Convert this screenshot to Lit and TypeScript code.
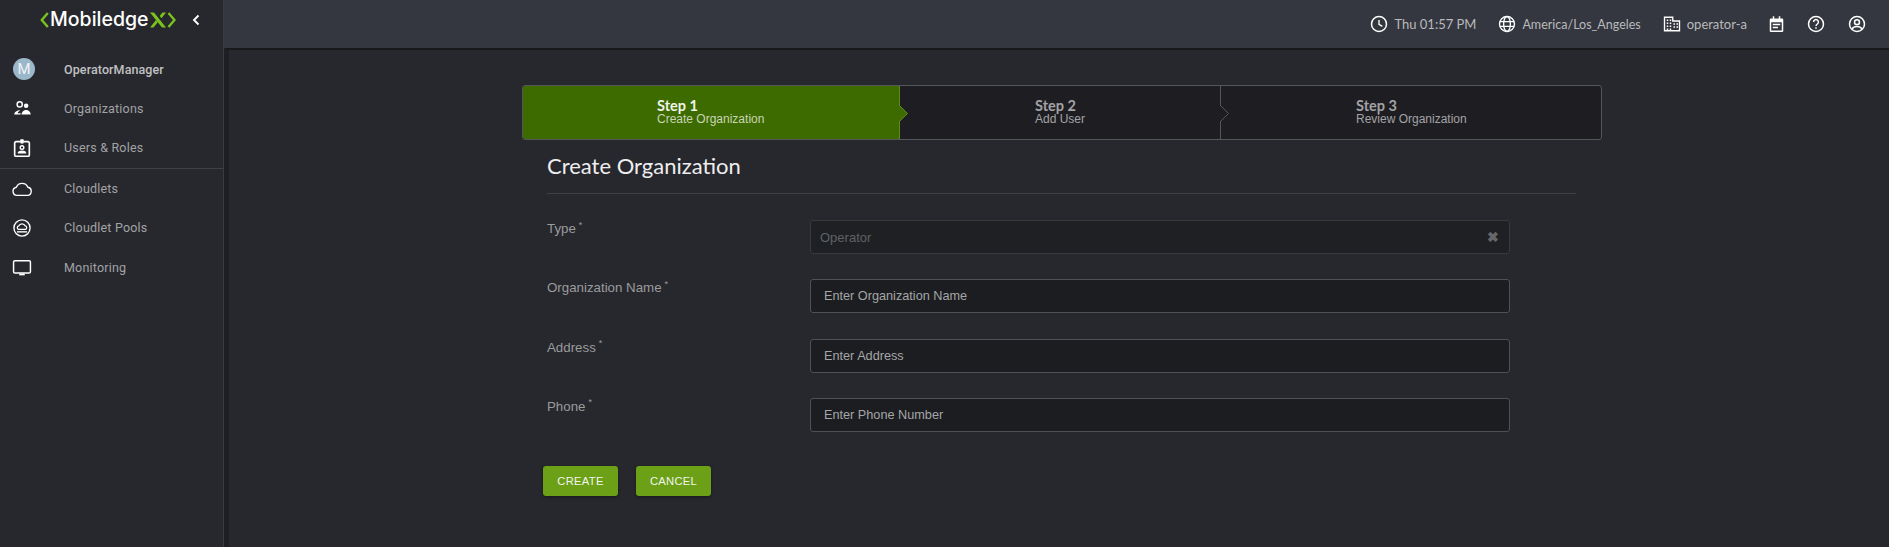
import { LitElement, html, css, svg } from 'lit';
import { customElement } from 'lit/decorators.js';

const NAV_TOP = [
  { label: 'Organizations', icon: svg`<circle cx="9.500" cy="7" r="2.800" fill="none" stroke="#fff" stroke-width="1.600"/><circle cx="16.500" cy="8.500" r="2.500" fill="#fff"/><path d="M3.500 18c.3-2.800 3-4.600 6.500-4.600-1.600 1-2.400 2-2.700 3.100h3.200V18z" fill="#fff"/><path d="M11.500 18c0-2.800 2.600-5 5-5s5 2.200 5 5z" fill="#fff"/>` },
  { label: 'Users & Roles', icon: svg`<path d="M10 5H5.500A1.500 1.500 0 0 0 4 6.500v13A1.500 1.500 0 0 0 5.500 21h13a1.500 1.500 0 0 0 1.500-1.500v-13A1.500 1.500 0 0 0 18.500 5H14" fill="none" stroke="#fff" stroke-width="1.800"/><rect x="10" y="2.500" width="4" height="4.500" rx="1" fill="#fff"/><circle cx="12" cy="11.500" r="2" fill="none" stroke="#fff" stroke-width="1.500"/><path d="M7.500 18v-1c0-1.500 2.700-2.300 4.500-2.300s4.500.8 4.500 2.300v1z" fill="#fff"/>` },
];

const NAV_BOTTOM = [
  { label: 'Cloudlets', icon: svg`<path d="M6.500 19A4.500 4.500 0 0 1 5.800 10.100 6.800 6.800 0 0 1 18.400 10.100 4.500 4.500 0 0 1 18 19z" fill="none" stroke="#fff" stroke-width="1.500"/>` },
  { label: 'Cloudlet Pools', icon: svg`<circle cx="12" cy="12" r="8.800" fill="none" stroke="#fff" stroke-width="1.500"/><path d="M8.300 13.500a1.900 1.900 0 0 1 .1-3.700 3.900 3.900 0 0 1 7.200 0 1.900 1.900 0 0 1 .1 3.700z" fill="none" stroke="#fff" stroke-width="1.400"/><path d="M6.500 16.200h11" stroke="#fff" stroke-width="1.500"/>` },
  { label: 'Monitoring', icon: svg`<rect x="2.800" y="4" width="18.400" height="13.500" rx="1.500" fill="none" stroke="#fff" stroke-width="1.600"/><rect x="9" y="18" width="6" height="2" fill="#fff"/>` },
];

const STEPS = [
  { title: 'Step 1', sub: 'Create Organization', active: true },
  { title: 'Step 2', sub: 'Add User', active: false },
  { title: 'Step 3', sub: 'Review Organization', active: false },
];

const FIELDS = [
  { label: 'Organization Name', placeholder: 'Enter Organization Name' },
  { label: 'Address', placeholder: 'Enter Address' },
  { label: 'Phone', placeholder: 'Enter Phone Number' },
];

@customElement('app-root')
export class AppRoot extends LitElement {
  static styles = css`
    :host {
      display: grid;
      grid-template-columns: 224px 1fr;
      width: 100vw;
      height: 100vh;
      overflow: hidden;
      background: #27282d;
      font-family: 'Liberation Sans', sans-serif;
    }

    svg {
      display: block;
      flex: none;
    }

    .sidebar {
      background: #27282d;
      border-right: 1px solid #3a3b40;
      box-sizing: border-box;
      width: 224px;
    }

    .logo {
      height: 49px;
      display: flex;
      align-items: center;
      padding: 0 0 9px 40px;
      color: #fff;
      box-sizing: border-box;
    }

    .logo-text {
      font: 500 19.500px Inter, sans-serif;
      line-height: 1;
      margin: 0 1px;
    }

    .collapse {
      margin-left: 16px;
    }

    .nav-item {
      height: 39px;
      display: flex;
      align-items: center;
      color: #a2a3a6;
      font: 400 12.500px Roboto, sans-serif;
      letter-spacing: 0.2px;
    }

    .nav-item:last-child {
      height: 41px;
    }

    .nav-item.first {
      height: 40px;
      color: #c0c1c3;
      font-weight: 500;
      letter-spacing: 0.1px;
    }

    .nav-icon {
      width: 64px;
      display: flex;
      justify-content: center;
      padding-right: 20px;
      box-sizing: border-box;
    }

    .avatar {
      width: 22px;
      height: 22px;
      margin-left: 4px;
      border-radius: 50%;
      background: #9bb8cb;
      color: #eef2f5;
      font: 400 15px Roboto, sans-serif;
      display: flex;
      align-items: center;
      justify-content: center;
    }

    .nav-rule {
      height: 1px;
      background: #3f4045;
      margin-top: 1px;
    }

    .main {
      display: flex;
      flex-direction: column;
      min-width: 0;
    }

    .topbar {
      height: 48px;
      flex: none;
      background: #34373f;
      display: flex;
      align-items: center;
      justify-content: flex-end;
      padding-right: 23px;
      color: #b9babd;
      font: 400 13px Lato, sans-serif;
    }

    .top-item {
      display: flex;
      align-items: center;
      gap: 6px;
      margin-right: 22px;
    }

    .top-item.zone {
      font-size: 12.500px;
    }

    .top-icon {
      margin-right: 23px;
    }

    .top-icon:last-child {
      margin-right: 0;
    }

    .content {
      flex: 1;
      border-top: 2px solid #18191b;
      border-left: 5px solid #1e1f22;
      padding: 35px 0 0 293px;
    }

    .stepper {
      width: 1080px;
      height: 55px;
      box-sizing: border-box;
      display: flex;
      border: 1px solid #55565a;
      border-radius: 3px;
      background: #1e1e22;
    }

    .step {
      position: relative;
      display: flex;
      flex-direction: column;
      justify-content: center;
      box-sizing: border-box;
      padding-bottom: 2px;
      color: #a3a3a6;
      border-right: 1px solid #55565a;
    }

    .step:nth-child(1) {
      width: 377px;
      padding-left: 134px;
    }

    .step:nth-child(2) {
      width: 321px;
      padding-left: 135px;
    }

    .step:nth-child(3) {
      flex: 1;
      padding-left: 135px;
      border-right: 0;
    }

    .step.active {
      background: #3d6b00;
      border-right-color: #5c8a1e;
      color: #c8d5b5;
      border-radius: 2px 0 0 2px;
    }

    .step-title {
      font: 700 14.500px/15px Lato, sans-serif;
    }

    .step.active .step-title {
      color: #f0f4ea;
    }

    .step-sub {
      font-size: 12px;
      line-height: 12px;
    }

    .chevron {
      position: absolute;
      right: -9px;
      top: 19px;
      width: 9px;
      height: 17px;
      z-index: 1;
    }

    .form {
      width: 1029px;
      margin-left: 25px;
    }

    h1 {
      margin: 0;
      padding: 12px 0 13px;
      font: 400 22px/28px Lato, sans-serif;
      color: #eeeeef;
      border-bottom: 1px solid #3f4045;
    }

    .rows {
      padding-top: 26px;
    }

    .row {
      display: flex;
      height: 34px;
      margin-bottom: 25.300px;
      color: #9a9b9e;
      font-size: 13.300px;
    }

    .label {
      width: 263px;
      flex: none;
      line-height: 18px;
    }

    .label sup {
      font-size: 9px;
      line-height: 0;
      margin-left: 3px;
    }

    .input {
      width: 700px;
      box-sizing: border-box;
      display: flex;
      align-items: center;
      justify-content: space-between;
      padding: 0 13px;
      color: #a5a6a8;
      background: #1c1d20;
      border: 1px solid #505154;
      border-radius: 3px;
      font-size: 12.700px;
    }

    .input.disabled {
      padding: 0 10px 0 9px;
      color: #5f6064;
      background: #1f2024;
      border-color: #38393d;
      font-size: 13px;
    }

    .clear {
      color: #66676a;
      font-size: 14px;
      font-weight: 700;
      line-height: 1;
    }

    .actions {
      display: flex;
      gap: 18px;
      margin: 34px 0 0 -4px;
    }

    .btn {
      width: 75px;
      height: 30px;
      border: 0;
      border-radius: 3px;
      background: #6ba017;
      color: #f2f5ec;
      font: 400 11.200px 'Liberation Sans', sans-serif;
      letter-spacing: 0.3px;
      box-shadow: 0 1px 3px rgba(0, 0, 0, 0.4);
    }
  `;

  private renderNav(items: typeof NAV_TOP) {
    return items.map(
      (item) => html`
        <div class="nav-item">
          <span class="nav-icon">
            <svg width="22" height="22" viewBox="0 0 24 24">${item.icon}</svg>
          </span>
          ${item.label}
        </div>
      `
    );
  }

  render() {
    return html`
      <aside class="sidebar">
        <div class="logo">
          <svg width="9" height="16" viewBox="0 0 9 16">
            <path d="M7.800 1 1.800 8l6 7" fill="none" stroke="#7ac31c" stroke-width="2.400"/>
          </svg>
          <span class="logo-text">Mobiledge</span>
          <svg width="26" height="16" viewBox="0 0 26 16">
            <path d="M0 .5h4l12 15h-4z" fill="#7ac31c"/>
            <path d="M0 15.500h3.600l4.200-5.300-1.800-2.300zM12.400.5H16l-4.500 5.700-1.800-2.300z" fill="#7ac31c"/>
            <path d="M18.500 1l6 7-6 7" fill="none" stroke="#7ac31c" stroke-width="2.400"/>
          </svg>
          <svg class="collapse" width="8" height="12" viewBox="0 0 8 12">
            <path d="M6.500 1.500 2 6l4.500 4.500" fill="none" stroke="#fff" stroke-width="1.900"/>
          </svg>
        </div>
        <div class="nav-item first">
          <span class="nav-icon"><span class="avatar">M</span></span>
          OperatorManager
        </div>
        ${this.renderNav(NAV_TOP)}
        <div class="nav-rule"></div>
        ${this.renderNav(NAV_BOTTOM)}
      </aside>

      <div class="main">
        <header class="topbar">
          <span class="top-item">
            <svg width="18" height="18" viewBox="0 0 24 24">
              <circle cx="12" cy="12" r="10" fill="none" stroke="#fff" stroke-width="2"/>
              <path d="M12 6.500V12.500l4.500 2.700" fill="none" stroke="#fff" stroke-width="1.800"/>
            </svg>
            Thu 01:57 PM
          </span>
          <span class="top-item zone">
            <svg width="18" height="18" viewBox="0 0 24 24" fill="none" stroke="#fff" stroke-width="1.800">
              <circle cx="12" cy="12" r="10"/>
              <ellipse cx="12" cy="12" rx="4.500" ry="10"/>
              <path d="M2.500 8.800h19M2.500 15.200h19"/>
            </svg>
            America/Los_Angeles
          </span>
          <span class="top-item">
            <svg width="18" height="18" viewBox="0 0 24 24">
              <path d="M2 3h11v5h9v13H2z" fill="none" stroke="#fff" stroke-width="1.800"/>
              <path d="M5 6h2v2H5zM9 6h2v2H9zM5 10h2v2H5zM9 10h2v2H9zM5 14h2v2H5zM9 14h2v2H9zM5 18h2v2H5zM9 18h2v2H9zM14 11h2v2h-2zM18 11h2v2h-2zM14 15h2v2h-2zM18 15h2v2h-2z" fill="#fff"/>
            </svg>
            operator-a
          </span>
          <svg class="top-icon" width="15" height="17" viewBox="0 0 20 22">
            <path d="M5 0h2v3h6V0h2v3h2.500A1.500 1.500 0 0 1 19 4.500v15a1.500 1.500 0 0 1-1.500 1.500h-15A1.500 1.500 0 0 1 1 19.500v-15A1.500 1.500 0 0 1 2.500 3H5zM3 8v11h14V8zM5 10h10v2H5zM5 14h7v2H5z" fill="#fff" fill-rule="evenodd"/>
          </svg>
          <svg class="top-icon" width="18" height="18" viewBox="0 0 24 24" fill="none" stroke="#fff" stroke-width="2">
            <circle cx="12" cy="12" r="10"/>
            <path d="M8.800 9.300a3.200 3.200 0 1 1 5 2.700c-1.200.8-1.800 1.400-1.800 2.800"/>
            <path d="M11 16.300h2v2h-2z" fill="#fff" stroke="none"/>
          </svg>
          <svg class="top-icon" width="18" height="18" viewBox="0 0 24 24" fill="none" stroke="#fff" stroke-width="2">
            <circle cx="12" cy="12" r="10"/>
            <circle cx="12" cy="9.500" r="3.300"/>
            <path d="M5.500 18.500c1.200-2.300 4-3.300 6.500-3.300s5.300 1 6.500 3.300"/>
          </svg>
        </header>

        <main class="content">
          <div class="stepper">
            ${STEPS.map(
              (step, i) => html`
                <div class="step ${step.active ? 'active' : ''}">
                  <span class="step-title">${step.title}</span>
                  <span class="step-sub">${step.sub}</span>
                  ${i < 2
                    ? html`<svg class="chevron" viewBox="0 0 9 17">
                        <path
                          d="M0 0 8.500 8.500 0 17"
                          fill=${step.active ? '#3d6b00' : '#1e1e22'}
                          stroke=${step.active ? '#5c8a1e' : '#55565a'}
                        />
                      </svg>`
                    : ''}
                </div>
              `
            )}
          </div>

          <section class="form">
            <h1>Create Organization</h1>
            <div class="rows">
              <div class="row">
                <span class="label">Type<sup>*</sup></span>
                <div class="input disabled">Operator<span class="clear">✖</span></div>
              </div>
              ${FIELDS.map(
                (field) => html`
                  <div class="row">
                    <span class="label">${field.label}<sup>*</sup></span>
                    <div class="input">${field.placeholder}</div>
                  </div>
                `
              )}
            </div>
            <div class="actions">
              <button class="btn">CREATE</button>
              <button class="btn">CANCEL</button>
            </div>
          </section>
        </main>
      </div>
    `;
  }
}
